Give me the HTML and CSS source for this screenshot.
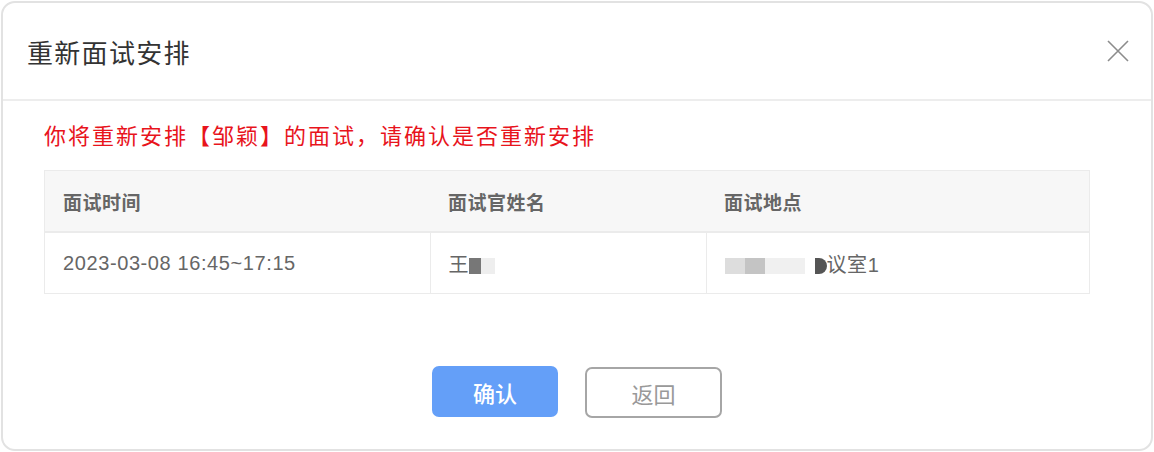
FILE: index.html
```html
<!DOCTYPE html>
<html lang="zh-CN">
<head>
    <meta charset="UTF-8">
    <meta name="viewport" content="width=device-width, initial-scale=1.0">
    <title>重新面试安排</title>
    <link rel="stylesheet" href="styles.css">
</head>
<body>
    <div class="dialog">
        <div class="dialog-header">
            <span class="dialog-title">重新面试安排</span>
            <svg class="close" width="22" height="22" viewBox="0 0 22 22">
                <path d="M1 1 L21 21 M21 1 L1 21" stroke="#8c8c8c" stroke-width="1.6" fill="none"/>
            </svg>
        </div>
        <div class="dialog-body">
            <p class="warn">你将重新安排【邹颖】的面试，请确认是否重新安排</p>
            <table class="info">
                <tr>
                    <th class="col-time">面试时间</th>
                    <th class="col-name">面试官姓名</th>
                    <th>面试地点</th>
                </tr>
                <tr>
                    <td>2023-03-08 16:45~17:15</td>
                    <td>王<span class="mask mask-name"><i class="m1"></i><i class="m2"></i></span></td>
                    <td><span class="mask mask-place"><i class="m3"></i><i class="m4"></i><i class="m5"></i><i class="m6"></i></span>议室1</td>
                </tr>
            </table>
        </div>
        <div class="dialog-footer">
            <button class="btn btn-primary">确认</button>
            <button class="btn btn-plain">返回</button>
        </div>
    </div>
</body>
</html>
```

FILE: styles.css
```css
body{
    margin: 0;
    background: #fff;
    font-family: "Noto Sans CJK SC", "Noto Sans", sans-serif;
}
.dialog{
    box-sizing: border-box;
    width: 1152px;
    height: 450px;
    margin: 1px;
    border: 2px solid #e2e2e2;
    border-radius: 14px;
    background: #fff;
}
.dialog-header{
    height: 96px;
    display: flex;
    align-items: center;
    justify-content: space-between;
    padding: 0 22px 0 24px;
    border-bottom: 2px solid #ededed;
}
.dialog-title{
    font-size: 26px;
    letter-spacing: 1.3px;
    color: #333;
}
.dialog-body{
    padding: 17px 0 0 41px;
}
.warn{
    margin: 0;
    height: 32px;
    line-height: 32px;
    font-size: 22px;
    letter-spacing: 2px;
    color: #e8141c;
}
.info{
    margin-top: 20px;
    width: 1046px;
    border-collapse: collapse;
    border: 1px solid #ebebeb;
    font-size: 19px;
    color: #666;
}
.info th{
    height: 60px;
    padding: 0 18px;
    text-align: left;
    font-weight: 700;
    letter-spacing: 0.5px;
    background: #f7f7f7;
    border-bottom: 2px solid #ebebeb;
}
.info td{
    height: 60px;
    padding: 0 18px;
    font-family: "Liberation Sans", "Noto Sans CJK SC", sans-serif;
    font-size: 20px;
    letter-spacing: 0.6px;
    border-left: 1px solid #ebebeb;
}
.info .col-time{
    width: 349px;
}
.info .col-name{
    width: 240px;
}
.mask{
    display: inline-flex;
    vertical-align: middle;
    height: 16px;
}
.mask i{
    display: inline-block;
    height: 16px;
}
.m1{ width: 12px; background: #777; }
.m2{ width: 14px; background: #eee; }
.m3{ width: 20px; background: #ddd; }
.m4{ width: 20px; background: #c4c4c4; }
.m5{ width: 40px; background: #f0f0f0; }
.m6{ width: 12px; background: #555; border-radius: 0 8px 8px 0; margin-left: 10px; }
.dialog-footer{
    display: flex;
    justify-content: center;
    gap: 27px;
    margin-top: 72px;
}
.btn{
    box-sizing: border-box;
    font-family: inherit;
    font-size: 22px;
    border-radius: 7px;
    cursor: pointer;
}
.btn-primary{
    width: 126px;
    height: 51px;
    border: none;
    background: #649ff8;
    color: #fff;
    font-weight: 500;
}
.btn-plain{
    width: 137px;
    height: 51px;
    margin-top: 1px;
    border: 2px solid #a6a6a6;
    background: #fff;
    color: #999;
}
```
